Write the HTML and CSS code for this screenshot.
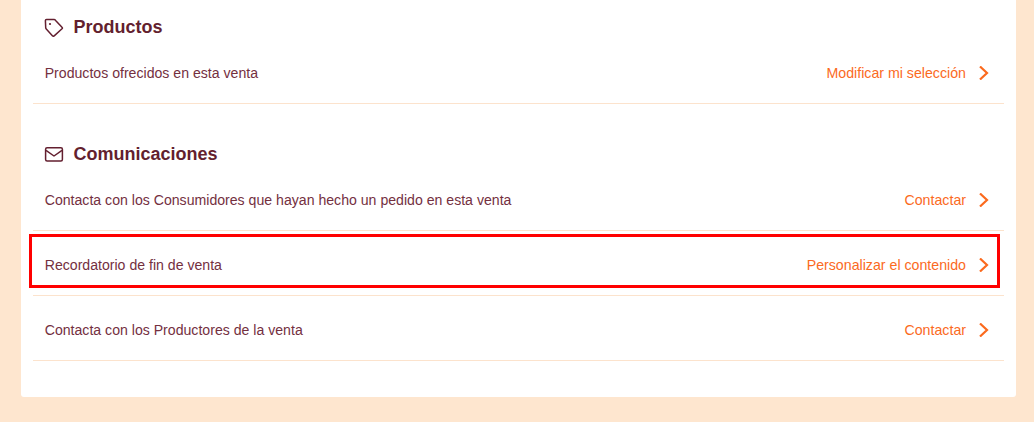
FILE: index.html
```html
<!DOCTYPE html>
<html lang="en">
<head>
    <meta charset="UTF-8">
    <title>Venta</title>
    <link rel="stylesheet" href="styles.css">
</head>
<body>
    <main class="card">
        <section class="block block-products">
            <h2 class="block-title">
                <svg class="title-icon" viewBox="0 0 20 20" width="20" height="20" fill="none" stroke="currentColor" stroke-width="1.5" stroke-linejoin="round">
                    <path d="M1.4 3.6 L1.7 10.6 Q1.8 11.6 2.5 12.3 L8.6 18.9 Q9.4 19.6 10.2 18.9 L18 11.8 Q18.8 11 18 10.2 L11.6 3.4 Q11 2.6 10 2.6 L2.5 2.5 Q1.4 2.5 1.4 3.6 Z"/>
                    <circle cx="6" cy="7" r="1.1" fill="currentColor" stroke="none"/>
                </svg>
                Productos
            </h2>
            <div class="row">
                <span>Productos ofrecidos en esta venta</span>
                <a class="action">Modificar mi selección
                    <svg class="chevron" viewBox="0 0 10 14" width="10" height="14" fill="none" stroke="currentColor" stroke-width="2.2"><path d="M1 0.5 L8 7 L1 13.5"/></svg>
                </a>
            </div>
        </section>

        <section class="block block-comms">
            <h2 class="block-title">
                <svg class="title-icon" viewBox="0 0 20 20" width="20" height="20" fill="none" stroke="currentColor" stroke-width="1.5" stroke-linejoin="round">
                    <rect x="1.6" y="3.7" width="16.8" height="13.2" rx="1.5"/>
                    <path d="M2 6.4 L10 12 L18 6.4"/>
                </svg>
                Comunicaciones
            </h2>
            <div class="row">
                <span>Contacta con los Consumidores que hayan hecho un pedido en esta venta</span>
                <a class="action">Contactar
                    <svg class="chevron" viewBox="0 0 10 14" width="10" height="14" fill="none" stroke="currentColor" stroke-width="2.2"><path d="M1 0.5 L8 7 L1 13.5"/></svg>
                </a>
            </div>
            <div class="row">
                <span>Recordatorio de fin de venta</span>
                <a class="action">Personalizar el contenido
                    <svg class="chevron" viewBox="0 0 10 14" width="10" height="14" fill="none" stroke="currentColor" stroke-width="2.2"><path d="M1 0.5 L8 7 L1 13.5"/></svg>
                </a>
                <div class="highlight"></div>
            </div>
            <div class="row">
                <span>Contacta con los Productores de la venta</span>
                <a class="action">Contactar
                    <svg class="chevron" viewBox="0 0 10 14" width="10" height="14" fill="none" stroke="currentColor" stroke-width="2.2"><path d="M1 0.5 L8 7 L1 13.5"/></svg>
                </a>
            </div>
        </section>
    </main>
</body>
</html>
```

FILE: styles.css
```css
html, body {
    height: 100%;
}

body {
    margin: 0;
    background-color: #fee6cf;
    font-family: "Liberation Sans", Arial, sans-serif;
    color: #74303f;
    overflow: hidden;
}

.card {
    box-sizing: border-box;
    width: 995px;
    height: 397px;
    margin-left: 21px;
    padding: 0 12px;
    background: #fff;
    border-radius: 0 0 3px 3px;
}

.block-products {
    padding-top: 15px;
}

.block-comms {
    padding-top: 38px;
}

.block-title {
    display: flex;
    align-items: center;
    gap: 9.5px;
    height: 24px;
    margin: 0;
    padding-left: 11px;
    font-size: 18px;
    font-weight: bold;
    color: #631f2f;
}

.title-icon {
    flex: none;
}

.row {
    position: relative;
    display: flex;
    justify-content: space-between;
    align-items: center;
    box-sizing: border-box;
    height: 65px;
    padding: 3px 15px 0 11.7px;
    font-size: 14.12px;
    border-bottom: 1px solid #fce3cd;
}

.action {
    display: flex;
    align-items: center;
    gap: 13px;
    font-size: 14.2px;
    color: #fb6a1e;
}

.highlight {
    position: absolute;
    top: 3px;
    left: -4px;
    right: 4px;
    height: 54px;
    border: 3px solid #f00;
    box-sizing: border-box;
}
```
